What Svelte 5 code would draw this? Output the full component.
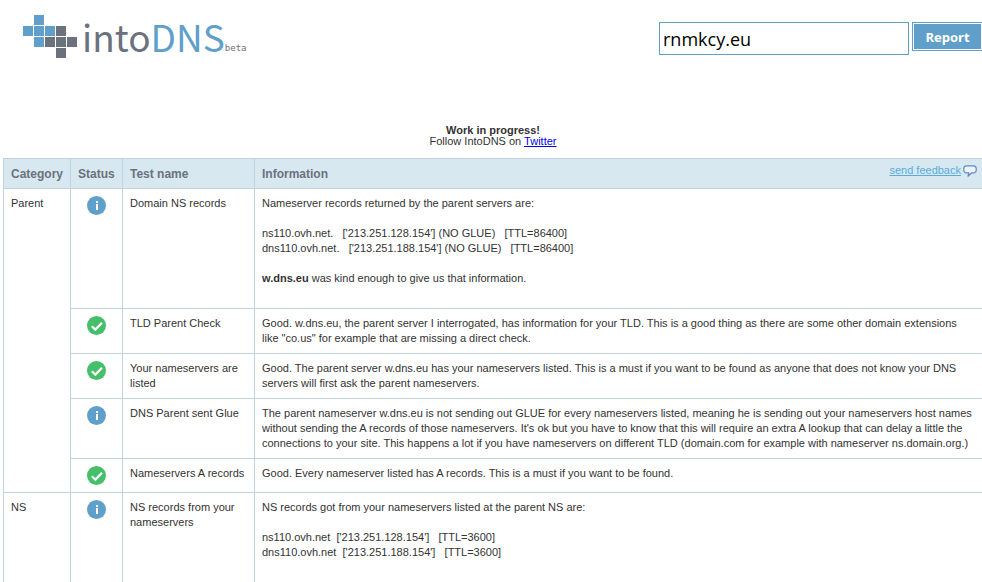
<script>
  let domain = $state('rnmkcy.eu');

  const squares = [
    [11, 0, 'blue'],
    [0, 11, 'blue'],
    [11, 11, 'blue'],
    [22, 11, 'blue'],
    [33, 11, 'gray'],
    [11, 22, 'blue'],
    [22, 22, 'gray'],
    [33, 22, 'gray'],
    [44, 22, 'gray'],
    [33, 33, 'gray'],
  ];

  const categories = [
    {
      name: 'Parent',
      tests: [
        {
          status: 'info',
          name: 'Domain NS records',
          text: "Nameserver records returned by the parent servers are:\n\nns110.ovh.net.   ['213.251.128.154'] (NO GLUE)   [TTL=86400]\ndns110.ovh.net.   ['213.251.188.154'] (NO GLUE)   [TTL=86400]\n\n",
          strong: 'w.dns.eu',
          after: ' was kind enough to give us that information.\n\n',
        },
        {
          status: 'pass',
          name: 'TLD Parent Check',
          text: 'Good. w.dns.eu, the parent server I interrogated, has information for your TLD. This is a good thing as there are some other domain extensions like "co.us" for example that are missing a direct check.',
        },
        {
          status: 'pass',
          name: 'Your nameservers are listed',
          text: 'Good. The parent server w.dns.eu has your nameservers listed. This is a must if you want to be found as anyone that does not know your DNS servers will first ask the parent nameservers.',
        },
        {
          status: 'info',
          name: 'DNS Parent sent Glue',
          text: "The parent nameserver w.dns.eu is not sending out GLUE for every nameservers listed, meaning he is sending out your nameservers host names without sending the A records of those nameservers. It's ok but you have to know that this will require an extra A lookup that can delay a little the connections to your site. This happens a lot if you have nameservers on different TLD (domain.com for example with nameserver ns.domain.org.)",
        },
        {
          status: 'pass',
          name: 'Nameservers A records',
          text: 'Good. Every nameserver listed has A records. This is a must if you want to be found.',
        },
      ],
    },
    {
      name: 'NS',
      tests: [
        {
          status: 'info',
          name: 'NS records from your nameservers',
          text: "NS records got from your nameservers listed at the parent NS are:\n\nns110.ovh.net  ['213.251.128.154']   [TTL=3600]\ndns110.ovh.net  ['213.251.188.154']   [TTL=3600]\n\n",
        },
      ],
    },
  ];
</script>

<div class="page">
  <div class="content">
    <header>
      <a class="logo" href="/" aria-label="intoDNS beta">
        <svg width="54" height="43" viewBox="0 0 54 43" aria-hidden="true">
          {#each squares as [x, y, tone]}
            <rect {x} {y} width="10" height="10" class={tone} />
          {/each}
        </svg>
        <span class="word">into<span class="dns">DNS</span></span>
        <span class="beta">beta</span>
      </a>
      <form onsubmit={(e) => e.preventDefault()}>
        <input type="text" aria-label="Domain" bind:value={domain} />
        <button type="submit">Report</button>
      </form>
    </header>

    <p class="notice">
      <strong>Work in progress!</strong><br />
      Follow IntoDNS on <a href="#twitter">Twitter</a>
    </p>

    <table>
      <colgroup>
        <col class="c-category" />
        <col class="c-status" />
        <col class="c-test" />
        <col />
      </colgroup>
      <thead>
        <tr>
          <th>Category</th>
          <th>Status</th>
          <th>Test name</th>
          <th class="info-head">
            <div>
              <span>Information</span>
              <a href="#feedback">send feedback</a>
              <svg width="14" height="12" viewBox="0 0 14 12" aria-hidden="true">
                <path
                  d="M3.5 .8h7a2.6 2.6 0 0 1 2.7 2.6v1.8a2.6 2.6 0 0 1-2.7 2.6H8.8L5 11.2L5.8 7.8H3.5A2.6 2.6 0 0 1 .8 5.2V3.4A2.6 2.6 0 0 1 3.5 .8z"
                  fill="#edf4fd"
                  stroke="#5f88c0"
                  stroke-width="1.2"
                  stroke-linejoin="round"
                />
              </svg>
            </div>
          </th>
        </tr>
      </thead>
      {#each categories as category}
        <tbody>
          {#each category.tests as test, i}
            <tr>
              {#if i === 0}
                <td rowspan={category.tests.length}>{category.name}</td>
              {/if}
              <td class="status">
                {#if test.status === 'info'}
                  <svg width="19" height="19" viewBox="0 0 19 19" role="img" aria-label="Info">
                    <circle cx="9.5" cy="9.5" r="9.5" class="blue" />
                    <path d="M9 5h2v2H9zM9 8h2v6H9z" fill="#fff" />
                  </svg>
                {:else}
                  <svg width="19" height="19" viewBox="0 0 19 19" role="img" aria-label="Pass">
                    <circle cx="9.5" cy="9.5" r="9.5" fill="#45bf69" />
                    <path d="M4.8 10.2l3.6 3.4 6.6-6.8" fill="none" stroke="#fff" stroke-width="2.2" />
                  </svg>
                {/if}
              </td>
              <td>{test.name}</td>
              <td class="info">{test.text}{#if test.strong}<strong>{test.strong}</strong>{test.after}{/if}</td>
            </tr>
          {/each}
        </tbody>
      {/each}
    </table>
  </div>
</div>

<style>
  :global(body) {
    margin: 0;
    background: #fff;
  }
  .page {
    overflow-x: clip;
    font: 11px/15px 'Liberation Sans', Arial, sans-serif;
    color: #333;
  }
  .content {
    margin: 0 -1px 0 3px;
  }
  header {
    display: flex;
    justify-content: space-between;
    align-items: flex-start;
    height: 110px;
    padding: 15px 0 0 20px;
    box-sizing: border-box;
  }
  .logo {
    display: flex;
    align-items: flex-start;
    color: #6b727d;
    text-decoration: none;
  }
  .logo svg {
    margin-right: 5px;
  }
  .blue {
    fill: #5f9fca;
  }
  .gray {
    fill: #6b727d;
  }
  .word {
    font: 37px/42px 'Noto Sans CJK SC', 'Noto Sans', sans-serif;
  }
  .dns {
    color: #5f9fca;
  }
  .beta {
    font: 9px/12px 'DejaVu Sans Mono', monospace;
    padding-top: 27px;
  }
  form {
    display: flex;
    align-items: flex-start;
    gap: 3px;
    padding-top: 7px;
  }
  input {
    box-sizing: border-box;
    width: 250px;
    height: 33px;
    padding: 1px 3px;
    border: 1px solid #5f9fca;
    background: #fff;
    color: #000;
    font: 18px 'Open Sans', 'Noto Sans', sans-serif;
  }
  button {
    box-sizing: border-box;
    width: 71px;
    height: 29px;
    padding: 0;
    border: 1px solid #5f9fca;
    box-shadow: inset 0 0 0 1px #fff;
    background: #5f9fca;
    color: #fff;
    font: bold 13px 'Open Sans', 'Noto Sans', sans-serif;
  }
  .notice {
    margin: 0;
    padding: 15px 0 11px;
    text-align: center;
    line-height: 11px;
  }
  .notice a {
    color: #00e;
  }
  table {
    width: 100%;
    table-layout: fixed;
    border-collapse: separate;
    border-spacing: 0;
    border-top: 1px solid #c1d4dd;
    border-left: 1px solid #c1d4dd;
  }
  .c-category {
    width: 67px;
  }
  .c-status {
    width: 52px;
  }
  .c-test {
    width: 132px;
  }
  th,
  td {
    padding: 7px;
    border-right: 1px solid #c1d4dd;
    border-bottom: 1px solid #c1d4dd;
    text-align: left;
    vertical-align: top;
  }
  th {
    padding: 8px 7px 6px;
    background: #d7e8f0;
    color: #6b727d;
    font-size: 12px;
  }
  th.info-head {
    padding: 4px 6px 4px 7px;
  }
  .info-head div {
    display: flex;
    align-items: flex-start;
  }
  .info-head span {
    flex: 1;
    padding: 4px 0 2px;
  }
  .info-head a {
    color: #5aaadc;
    font-size: 11px;
    font-weight: normal;
  }
  .info-head svg {
    margin: 2px 0 0 2px;
  }
  .status {
    text-align: center;
  }
  .status svg {
    display: block;
    margin: 0 auto;
  }
  .info {
    white-space: pre-wrap;
  }
  th:last-child,
  td:last-child {
    border-right: 0;
  }
</style>
